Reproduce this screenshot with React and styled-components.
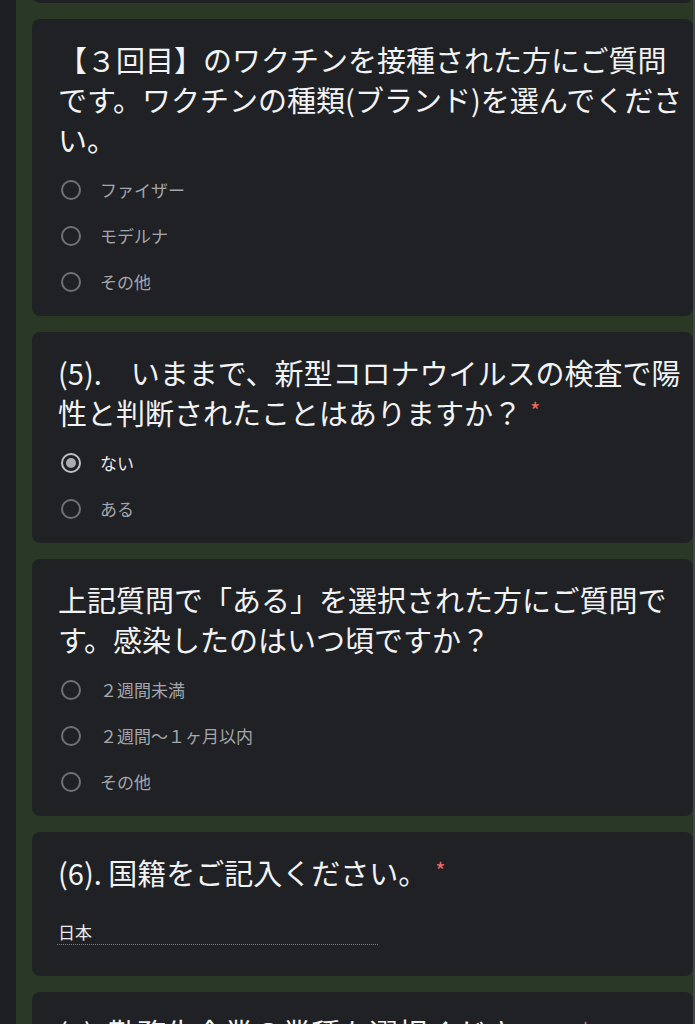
import React from 'react';
import styled, { createGlobalStyle } from 'styled-components';

const GlobalStyle = createGlobalStyle`
    html, body {
        margin: 0;
        padding: 0;
        background: #1f2023;
    }
    body {
        font-family: "Noto Sans CJK JP", "Noto Sans", sans-serif;
        color: #eceef0;
    }
    * {
        box-sizing: border-box;
    }
`

const Page = styled.div`
    display: flex;
    height: 1024px;
    overflow: hidden;
`
const LeftRail = styled.div`
    width: 16px;
    flex-shrink: 0;
    background: #1e1f22;
`
const Feed = styled.div`
    flex: 1;
    display: flex;
    flex-direction: column;
    gap: 16px;
    padding-left: 16px;
    background: #293925;
`
const EdgeRail = styled.div`
    width: 2px;
    flex-shrink: 0;
    background: #43474b;
`
const Card = styled.section`
    flex-shrink: 0;
    background: #202124;
    border-radius: 8px;
    padding: 20px 5px 11px 26px;
`
const StubCard = styled(Card)`
    height: 20px;
    margin-top: -17px;
    padding: 0;
`
const Title = styled.h2`
    margin: 0;
    font-size: 29px;
    font-weight: 400;
    line-height: 40px;
    color: #f1f3f4;
`
const Required = styled.span`
    margin-left: 8px;
    font-size: 22px;
    color: #ee6b5e;
    vertical-align: top;
    line-height: 34px;
`
const OptionList = styled.div`
    display: flex;
    flex-direction: column;
    margin-top: 8px;
`
const OptionRow = styled.label`
    display: flex;
    align-items: center;
    gap: 19px;
    height: 46px;
    padding-left: 3px;
`
const Radio = styled.span`
    position: relative;
    width: 20px;
    height: 20px;
    flex-shrink: 0;
    border-radius: 50%;
    border: 2px solid ${p => (p.$checked ? '#bdc1c6' : '#6e7276')};

    &::after {
        content: '';
        display: ${p => (p.$checked ? 'block' : 'none')};
        position: absolute;
        top: 3px;
        left: 3px;
        width: 10px;
        height: 10px;
        border-radius: 50%;
        background: #a9acb1;
    }
`
const OptionLabel = styled.span`
    font-size: 17px;
    line-height: 24px;
    color: ${p => (p.$checked ? '#e8eaed' : '#a3a6ab')};
`
const TextAnswer = styled.input`
    display: block;
    width: 321px;
    height: 26px;
    margin: 27px 0 20px -1px;
    padding: 0 0 0 1px;
    background: transparent;
    border: none;
    border-bottom: 1px dotted #7a7e83;
    outline: none;
    font-family: "Noto Sans CJK JP", "Noto Sans", sans-serif;
    font-size: 17px;
    color: #e8eaed;
`

const questions = [
    {
        title: '【３回目】のワクチンを接種された方にご質問です。ワクチンの種類(ブランド)を選んでください。',
        options: ['ファイザー', 'モデルナ', 'その他'],
    },
    {
        title: '(5).\u3000いままで、新型コロナウイルスの検査で陽性と判断されたことはありますか？',
        required: true,
        options: ['ない', 'ある'],
        checked: 0,
    },
    {
        title: '上記質問で「ある」を選択された方にご質問です。感染したのはいつ頃ですか？',
        options: ['２週間未満', '２週間〜１ヶ月以内', 'その他'],
    },
]

function Question({ title, required, options, checked }) {
    return (
        <Card>
            <Title>
                {title}
                {required && <Required>*</Required>}
            </Title>
            <OptionList>
                {options.map((opt, i) => (
                    <OptionRow key={opt}>
                        <Radio $checked={i === checked} />
                        <OptionLabel $checked={i === checked}>{opt}</OptionLabel>
                    </OptionRow>
                ))}
            </OptionList>
        </Card>
    )
}

export default function App() {
    return (
        <Page>
            <GlobalStyle />
            <LeftRail />
            <Feed>
                <StubCard />
                {questions.map(q => (
                    <Question key={q.title} {...q} />
                ))}
                <Card>
                    <Title>
                        (6). 国籍をご記入ください。
                        <Required>*</Required>
                    </Title>
                    <TextAnswer readOnly value="日本" />
                </Card>
                <Card>
                    <Title>
                        (7). 勤務先企業の業種を選択ください。
                        <Required>*</Required>
                    </Title>
                </Card>
            </Feed>
            <EdgeRail />
        </Page>
    )
}
